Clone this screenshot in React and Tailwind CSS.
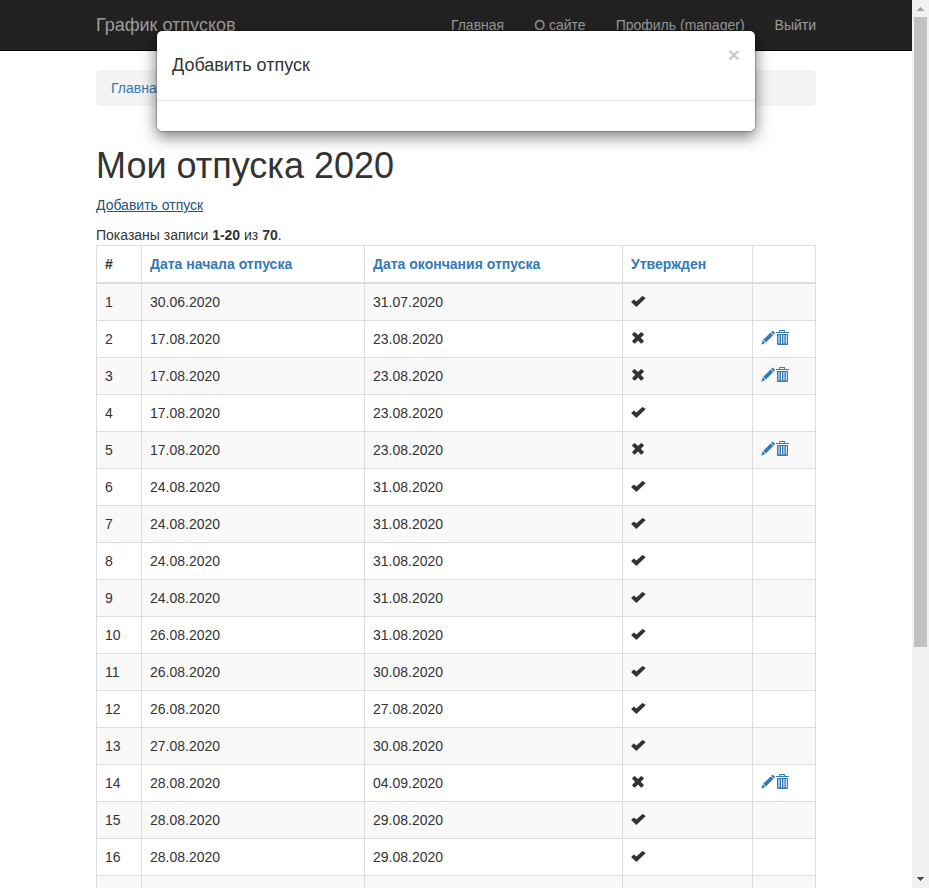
const YES = true;
const NO = false;

const rows = [
  ['30.06.2020', '31.07.2020', YES],
  ['17.08.2020', '23.08.2020', NO],
  ['17.08.2020', '23.08.2020', NO],
  ['17.08.2020', '23.08.2020', YES],
  ['17.08.2020', '23.08.2020', NO],
  ['24.08.2020', '31.08.2020', YES],
  ['24.08.2020', '31.08.2020', YES],
  ['24.08.2020', '31.08.2020', YES],
  ['24.08.2020', '31.08.2020', YES],
  ['26.08.2020', '31.08.2020', YES],
  ['26.08.2020', '30.08.2020', YES],
  ['26.08.2020', '27.08.2020', YES],
  ['27.08.2020', '30.08.2020', YES],
  ['28.08.2020', '04.09.2020', NO],
  ['28.08.2020', '29.08.2020', YES],
  ['28.08.2020', '29.08.2020', YES],
];

function Icon({ children }) {
  return (
    <svg width="14" height="16" viewBox="0 0 14 16" fill="currentColor" className="block shrink-0 overflow-visible">
      {children}
    </svg>
  );
}

function Check() {
  return (
    <Icon>
      <path d="M.5 9.700 2.500 7.700q.4-.4.800 0L5.300 9.600 11.200 4.200q.4-.4.800 0L14.300 5.700q.4.4 0 .8L5.900 14.500q-.5.500-1 0L.5 10.500q-.4-.4 0-.8z" />
    </Icon>
  );
}

function Cross() {
  return (
    <Icon>
      <path d="M3.200 3.200q.4-.4.800 0L7 6.100 9.900 3.200q.4-.4.800 0L12.700 5.100q.4.4 0 .8L9.800 8.800l2.900 2.900q.4.4 0 .8l-2 1.900q-.4.4-.8 0L7 11.500l-3 2.900q-.4.4-.8 0L1.300 12.500q-.4-.4 0-.8L4.200 8.800 1.300 5.900q-.4-.4 0-.8z" />
    </Icon>
  );
}

function Pencil() {
  return (
    <Icon>
      <path d="M11.100 1.900q.5-.5 1 0l1.700 1.700q.5.500 0 1l-1 1-2.700-2.700zM9.600 3.400l2.700 2.700-7.400 7.300-2.700-2.700zM1.700 11.300l2.700 2.700L.2 15.800z" />
    </Icon>
  );
}

function Trash() {
  return (
    <Icon>
      <path
        fillRule="evenodd"
        d="M4.800 1h4.700q.7 0 .7.700V3H14v1H1V3h3.100V1.700q0-.7.700-.7zM5 2v1h4.200V2zM2 5h11v10q0 1-1 1H3q-1 0-1-1zM3.500 6v8.500h1V6zM6 6v8.500h1V6zM8.400 6v8.500h1V6zM10.800 6v8.500h1V6z"
      />
    </Icon>
  );
}

const cell = 'border border-[#ddd] p-2 h-[37px]';

function Navbar() {
  return (
    <nav className="h-[51px] border-b border-[#080808] bg-[#222] text-[#9d9d9d]">
      <div className="mx-auto flex w-[720px] justify-between">
        <a className="py-[15px] text-[18px] leading-5">График отпусков</a>
        <ul className="flex gap-[30px] py-[15px]">
          <li>Главная</li>
          <li>О сайте</li>
          <li>Профиль (manager)</li>
          <li>Выйти</li>
        </ul>
      </div>
    </nav>
  );
}

function VacationTable() {
  return (
    <table className="w-[720px] table-fixed border-collapse border border-[#ddd]">
      <colgroup>
        <col className="w-[45px]" />
        <col className="w-[223px]" />
        <col className="w-[258px]" />
        <col className="w-[130px]" />
        <col />
      </colgroup>
      <thead>
        <tr className="text-left text-[#337ab7]">
          <th className="border border-b-2 border-[#ddd] p-2 text-[#333]">#</th>
          <th className="border border-b-2 border-[#ddd] p-2">Дата начала отпуска</th>
          <th className="border border-b-2 border-[#ddd] p-2">Дата окончания отпуска</th>
          <th className="border border-b-2 border-[#ddd] p-2">Утвержден</th>
          <th className="border border-b-2 border-[#ddd] p-2" />
        </tr>
      </thead>
      <tbody>
        {rows.map(([start, end, approved], i) => (
          <tr key={i} className="odd:bg-[#f9f9f9]">
            <td className={cell}>{i + 1}</td>
            <td className={cell}>{start}</td>
            <td className={cell}>{end}</td>
            <td className={cell}>
              <div className="flex h-5 items-start">{approved ? <Check /> : <Cross />}</div>
            </td>
            <td className={cell}>
              {!approved && (
                <div className="flex h-5 items-start text-[#337ab7]">
                  <Pencil />
                  <Trash />
                </div>
              )}
            </td>
          </tr>
        ))}
        <tr className="bg-[#f9f9f9]">
          <td className={cell} />
          <td className={cell} />
          <td className={cell} />
          <td className={cell} />
          <td className={cell} />
        </tr>
      </tbody>
    </table>
  );
}

function Modal() {
  return (
    <div className="absolute left-[156px] top-[30px] w-[600px] rounded-md border border-black/20 bg-white bg-clip-padding shadow-[0_5px_15px_rgba(0,0,0,0.5)]">
      <div className="flex h-[70px] items-start justify-between border-b border-[#e5e5e5] p-[15px]">
        <h4 className="mt-[10px] text-[18px] leading-[19.8px]">Добавить отпуск</h4>
        <button className="-mt-[2px] text-[21px] font-bold leading-[21px] text-black opacity-20 [text-shadow:0_1px_0_#fff]">×</button>
      </div>
      <div className="h-[30px]" />
    </div>
  );
}

function Scrollbar() {
  return (
    <div className="flex h-[888px] w-[17px] shrink-0 flex-col items-center bg-[#f1f1f1]">
      <svg width="17" height="17" className="shrink-0" shapeRendering="crispEdges">
        <path d="M5 11L8.500 7L12 11z" fill="#a3a3a3" />
      </svg>
      <div className="h-[630px] w-[13px] bg-[#c1c1c1]" />
      <svg width="17" height="17" className="mt-auto shrink-0" shapeRendering="crispEdges">
        <path d="M5 6L8.500 10L12 6z" fill="#505050" />
      </svg>
    </div>
  );
}

export default function App() {
  return (
    <div className="relative flex h-[888px] w-[929px] overflow-hidden bg-white font-['Liberation_Sans',Arial,sans-serif] text-[14px] leading-5 text-[#333]">
      <div className="h-[888px] w-[912px] overflow-hidden">
        <Navbar />
        <main className="mx-auto w-[720px] pt-[19px]">
          <div className="h-9 rounded bg-[#f4f4f4] px-[15px] py-2 text-[#337ab7]">Главная</div>
          <h1 className="mt-10 text-[36px] leading-[39.6px]">Мои отпуска 2020</h1>
          <p className="mb-[10px] mt-[9.4px]">
            <a className="text-[#23527c] underline">Добавить отпуск</a>
          </p>
          <div>
            Показаны записи <b>1-20</b> из <b>70</b>.
          </div>
          <VacationTable />
        </main>
      </div>
      <Scrollbar />
      <Modal />
    </div>
  );
}
